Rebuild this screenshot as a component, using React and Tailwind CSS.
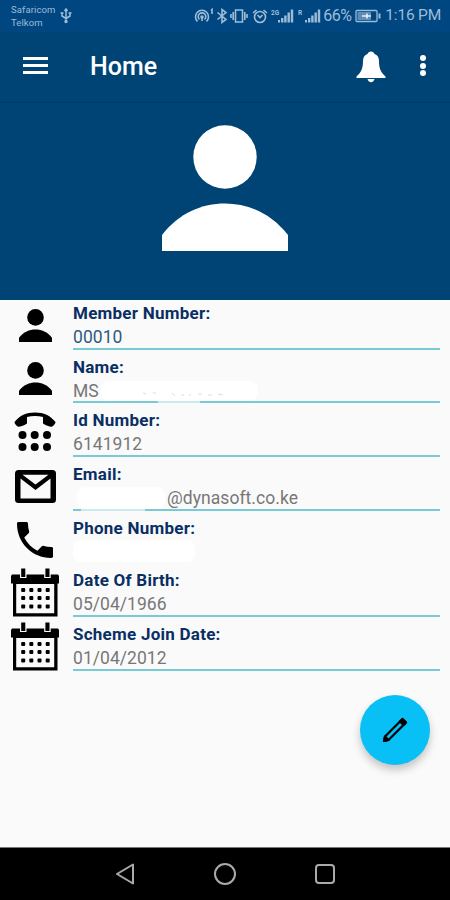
import React from 'react';

const PersonIcon = ({ className }) => (
    <svg viewBox="0 0 126 126" className={className} fill="currentColor">
        <circle cx="63" cy="32" r="31.7" />
        <path d="M0 126V110C17 88 40 78.500 63 78.500S109 88 126 110V126Z" />
    </svg>
);

const DialIcon = ({ className }) => (
    <svg viewBox="0 0 42 40" className={className} fill="currentColor">
        <path d="M.5 10C6 3 12 .4 21 .4S36 3 41.500 10C41.500 11.500 39 14.800 37 14.800C34.500 14.500 30.500 13 29 11.500V5C24 3.800 18 3.800 13 5V11.500C11.500 13 7.500 14.500 5 14.800C3 14.800 .5 11.500 .5 10Z" />
        {[23, 35].map((y) => [8.5, 20.7, 33].map((x) => (
            <circle key={`${x}-${y}`} cx={x} cy={y} r="4" />
        )))}
    </svg>
);

const MailIcon = ({ className }) => (
    <svg viewBox="0 0 41 33" className={className}>
        <rect width="41" height="33" rx="3.500" fill="#000" />
        <path d="M5.500 8.500L20.500 20L35.500 8.500V28.500H5.500Z" fill="#fafafa" />
        <path d="M7.500 4.800H33.500L20.500 14.500Z" fill="#fafafa" />
    </svg>
);

const PhoneIcon = ({ className }) => (
    <svg viewBox="3 3 18 18" className={className} fill="currentColor">
        <path d="M6.620 10.790c1.440 2.830 3.760 5.140 6.590 6.590l2.200-2.200c.27-.27.67-.36 1.020-.24 1.120.37 2.330.57 3.570.57.55 0 1 .25 1 .6V20.400c0 .35-.45.6-1 .6-9.390 0-17-7.610-17-17 0-.55.25-1 .6-1h4.300c.35 0 .6.45.6 1 0 1.250.2 2.450.57 3.570.11.35.03.74-.25 1.020l-2.200 2.200z" />
    </svg>
);

const CalendarIcon = ({ className }) => (
    <svg viewBox="0 0 48 49" className={className}>
        <path d="M1 6.500H47L48 8V15.500H46.500V48.500H2V15.500H0V8Z" fill="#000" />
        <path d="M5.200 16H43.200V45.300H5.200Z" fill="#fafafa" />
        <path d="M9 0H15.500V10H9ZM33.200 0H39.700V10H33.200Z" fill="#fafafa" />
        <path d="M10.200 .5H14.300V9H10.200ZM34.400 .5H38.500V9H34.400Z" fill="#000" />
        {[22, 30, 38.5].map((y) => [12.2, 20.3, 28.5, 36.7].map((x) => (
            <rect key={`${x}-${y}`} x={x - 2} y={y - 2} width="4" height="4" rx="1" fill="#000" />
        )))}
    </svg>
);

const SignalIcon = ({ label }) => (
    <svg viewBox="0 0 24 16" className="h-4 w-6" fill="currentColor">
        <text x="0" y="7" fontSize="6.500" fontWeight="700" fontFamily="Roboto">{label}</text>
        <path d="M7 12h2v2.500H7zM10 10h2.400v4.500H10zM13.200 7.500h2.400v7h-2.400zM16.500 4.500h2.400v10h-2.400zM19.800 1.500h2.400v13h-2.400z" />
    </svg>
);

const StatusBar = () => (
    <div className="flex h-8 items-center bg-[#004781] pl-[11px] pr-[9px] text-[#9dbcd8]">
        <div className="w-12 text-[9.500px] leading-[13px] tracking-[0.1px]">
            <div>Safaricom</div>
            <div>Telkom</div>
        </div>
        <svg viewBox="0 0 12 16" className="ml-px h-4 w-3" fill="none" stroke="currentColor" strokeWidth="1.500">
            <path d="M6 1V14M2 4.500V8L6 10.500L10 8V4.500M4.500 3L6 1L7.500 3" />
            <circle cx="6" cy="13.500" r="1" />
            <path d="M.5 5H3.500M8.500 5H11.500" />
        </svg>
        <div className="flex-1" />
        <svg viewBox="0 0 22 16" className="mr-px h-4 w-[22px]" fill="none" stroke="currentColor" strokeWidth="1.600">
            <path d="M4.500 13.500A6.500 6.500 0 1 1 13.500 13.500M6.500 11.500A3.800 3.800 0 1 1 11.500 11.500" />
            <circle cx="9" cy="9" r="1" />
            <path d="M9 9V13M19 6V1.500L18 2.500" />
        </svg>
        <svg viewBox="0 0 12 16" className="h-4 w-3" fill="none" stroke="currentColor" strokeWidth="1.600">
            <path d="M1.500 4.500L10 11.500L6 14.500V1.500L10 4.500L1.500 11.500" />
        </svg>
        <svg viewBox="0 0 18 16" className="ml-0.5 h-4 w-[18px]" fill="none" stroke="currentColor" strokeWidth="1.600">
            <path d="M5.500 2H12.500V14H5.500ZM3.200 4V12M14.800 4V12M1 6V10M17 6V10" />
        </svg>
        <svg viewBox="0 0 16 16" className="ml-1 h-4 w-4" fill="none" stroke="currentColor" strokeWidth="1.600">
            <circle cx="8" cy="9" r="5.500" />
            <path d="M1 5L4.500 2M15 5L11.500 2M5.500 7L8 9.500L10.500 7" />
        </svg>
        <div className="ml-[3px] mr-px flex gap-[3px]">
            <SignalIcon label="2G" />
            <SignalIcon label="R" />
        </div>
        <span className="text-[16px] tracking-[-0.5px]">66%</span>
        <svg viewBox="0 0 26 14" className="ml-1 h-3.5 w-[26px]" fill="none" stroke="currentColor" strokeWidth="1.300">
            <rect x="1" y="1.500" width="21" height="11" rx="1" />
            <path d="M2.500 3H16V11H2.500Z" fill="currentColor" fillOpacity=".6" stroke="none" />
            <path d="M7 7H16M12 4.500V9.500" stroke="#e4f1fb" strokeWidth="1.600" />
            <path d="M24.500 4.500V9.500" strokeWidth="2" />
        </svg>
        <span className="ml-1 whitespace-nowrap text-[15.500px] tracking-[-0.2px]">1:16 PM</span>
    </div>
);

const AppBar = () => (
    <div className="flex h-[71px] items-center border-b-2 border-[#003d69] pl-[23px] pr-6 text-white">
        <div className="mb-0.5 flex w-[25px] flex-col gap-1">
            <div className="h-[3px] bg-white" />
            <div className="h-[3px] bg-white" />
            <div className="h-[3px] bg-white" />
        </div>
        <h1 className="ml-[42px] flex-1 text-[25px] font-medium">Home</h1>
        <svg viewBox="0 0 30 32" className="h-8 w-[30px]" fill="currentColor">
            <path d="M15 .5C16.800 .5 18 1.500 18.500 3C21.500 4 23 6.500 23 10C23 17 24.500 21 29.500 25.500V27H.5V25.500C5.500 21 7 17 7 10C7 6.500 8.500 4 11.500 3C12 1.500 13.200 .5 15 .5Z" />
            <path d="M11.500 28H18.500C18 30 16.800 31.200 15 31.200S12 30 11.500 28Z" />
        </svg>
        <div className="mb-0.5 ml-[34px] flex flex-col gap-[1.500px]">
            <div className="size-1.5 rounded-full bg-white" />
            <div className="size-1.5 rounded-full bg-white" />
            <div className="size-1.5 rounded-full bg-white" />
        </div>
    </div>
);

// Blanked-out part of a value; `fade` is the stretch of underline it washes out
const Mask = ({ area, fade, specks }) => (
    <>
        <div className={`absolute rounded-lg bg-white ${area}`} />
        {fade && <div className={`absolute -bottom-0.5 h-0.5 bg-white/60 ${fade}`} />}
        {specks && (
            <svg viewBox="0 0 84 6" className="absolute bottom-1 left-[69px] h-1.5 w-[84px]" fill="none" stroke="#ddd">
                <path d="M1 2L4 3M11 1L14 3M30 2L33 5M39 4H42M48 3V5M56 3H60M66 4H70M76 3L81 4" />
            </svg>
        )}
    </>
);

const fields = [
    { label: 'Member Number:', value: '00010', Icon: PersonIcon, size: 'size-[33px]', row: 'h-[50px]', color: 'text-[#2d5b80]' },
    { label: 'Name:', value: 'MS', Icon: PersonIcon, size: 'size-[33px]', row: 'h-[53px] pt-1', mask: { area: 'left-[28px] bottom-0 h-[20px] w-[157px]', fade: 'left-[85px] w-[42px]', specks: true } },
    { label: 'Id Number:', value: '6141912', Icon: DialIcon, size: 'h-10 w-[42px]', row: 'h-[54px] pt-1' },
    { label: 'Email:', value: '@dynasoft.co.ke', Icon: MailIcon, size: 'h-[33px] w-[41px]', row: 'h-[54px] pt-1', indent: 'pl-[94px]', mask: { area: 'left-[4px] bottom-0 h-[22px] w-[88px]', fade: 'left-[8px] w-[64px]' } },
    { label: 'Phone Number:', value: '', Icon: PhoneIcon, size: 'size-9', row: 'h-[53px] pt-1', plain: true, mask: { area: 'left-0 bottom-0 h-[22px] w-[122px]' } },
    { label: 'Date Of Birth:', value: '05/04/1966', Icon: CalendarIcon, size: 'h-[49px] w-12', row: 'h-[53px] pt-[3px]' },
    { label: 'Scheme Join Date:', value: '01/04/2012', Icon: CalendarIcon, size: 'h-[49px] w-12', row: 'h-[54px] pt-1' },
];

const Field = ({ label, value, Icon, size, row, color = 'text-[#777]', indent = '', plain, mask }) => (
    <div className={`flex pr-[10px] ${row}`}>
        <div className="flex w-[73px] shrink-0 items-center justify-center pr-[3px] text-black">
            <Icon className={size} />
        </div>
        <div className={`relative flex-1 border-b-2 ${plain ? 'border-transparent' : 'border-[#78cbd5]'}`}>
            {mask && <Mask {...mask} />}
            <div className="relative pt-px text-[17px] font-bold leading-6 tracking-[0.25px] text-[#092e64]">{label}</div>
            <div className={`relative text-[17.500px] leading-6 tracking-[0.05px] ${color} ${indent}`}>{value}</div>
        </div>
    </div>
);

const App = () => (
    <div className="flex h-[900px] w-[450px] flex-col overflow-hidden bg-[#fafafa] font-['Roboto',sans-serif]">
        <div className="flex h-[300px] flex-col bg-[#004476]">
            <StatusBar />
            <AppBar />
            <div className="flex justify-center pt-[22px] text-white">
                <PersonIcon className="size-[126px]" />
            </div>
        </div>

        <div className="flex-1">
            {fields.map((field) => <Field key={field.label} {...field} />)}
            <div className="flex justify-end pr-5 pt-6">
                <button className="flex size-[70px] items-center justify-center rounded-full bg-[#08c0f5] shadow-[0_5px_8px_rgba(0,0,0,0.22)]">
                    <svg viewBox="0 0 26 26" className="size-[26px]" fill="none" stroke="#000" strokeWidth="2.200" strokeLinejoin="round">
                        <path d="M2 24L3 19.500L20.500 2L24 5.500L6.500 23Z" />
                        <path d="M18 4.500L20.500 2L24 5.500L21.500 8ZM2 24L3 19.500L6.500 23Z" fill="#000" />
                    </svg>
                </button>
            </div>
        </div>

        {/* System navigation */}
        <div className="flex h-[53px] items-center justify-between border-t border-[#777] bg-black px-[115px]">
            <svg viewBox="0 0 20 22" className="h-[22px] w-5" fill="none" stroke="#aaa" strokeWidth="2" strokeLinejoin="round">
                <path d="M18 1.500V20.500L2 11Z" />
            </svg>
            <div className="size-[22px] rounded-full border-2 border-[#aaa]" />
            <div className="size-5 rounded-sm border-2 border-[#aaa]" />
        </div>
    </div>
);

export default App;
